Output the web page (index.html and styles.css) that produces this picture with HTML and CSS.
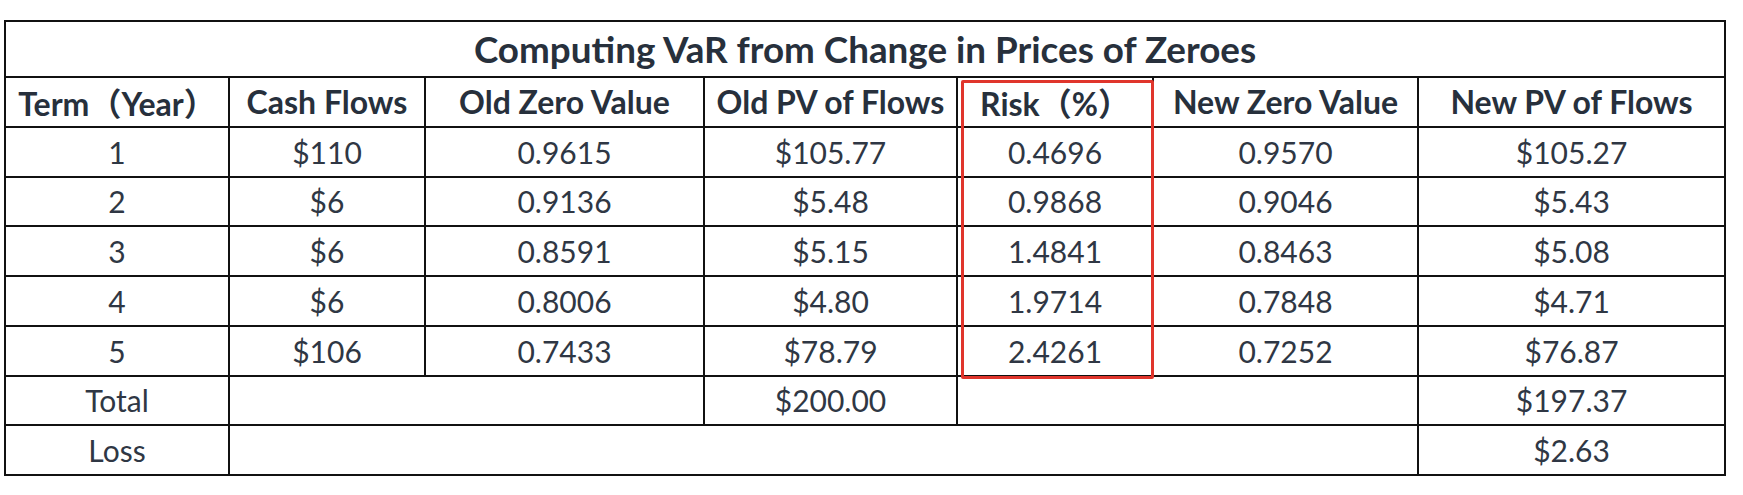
FILE: index.html
```html
<!DOCTYPE html>
<html>
<head>
<meta charset="utf-8">
<link rel="stylesheet" href="styles.css">
</head>
<body>
<div class="wrap">
  <table class="var">
    <colgroup>
      <col class="c1"><col class="c2"><col class="c3"><col class="c4"><col class="c5"><col class="c6"><col class="c7">
    </colgroup>
    <tr class="title-row"><th colspan="7" class="title">Computing VaR from Change in Prices of Zeroes</th></tr>
    <tr class="head"><th>Term（Year）</th><th>Cash Flows</th><th>Old Zero Value</th><th>Old PV of Flows</th><th>Risk（%）</th><th>New Zero Value</th><th>New PV of Flows</th></tr>
    <tr><td>1</td><td>$110</td><td>0.9615</td><td>$105.77</td><td>0.4696</td><td>0.9570</td><td>$105.27</td></tr>
    <tr><td>2</td><td>$6</td><td>0.9136</td><td>$5.48</td><td>0.9868</td><td>0.9046</td><td>$5.43</td></tr>
    <tr><td>3</td><td>$6</td><td>0.8591</td><td>$5.15</td><td>1.4841</td><td>0.8463</td><td>$5.08</td></tr>
    <tr><td>4</td><td>$6</td><td>0.8006</td><td>$4.80</td><td>1.9714</td><td>0.7848</td><td>$4.71</td></tr>
    <tr><td>5</td><td>$106</td><td>0.7433</td><td>$78.79</td><td>2.4261</td><td>0.7252</td><td>$76.87</td></tr>
    <tr><td>Total</td><td colspan="2"></td><td>$200.00</td><td colspan="2"></td><td>$197.37</td></tr>
    <tr><td>Loss</td><td colspan="5"></td><td>$2.63</td></tr>
  </table>
  <div class="highlight"></div>
</div>
</body>
</html>
```
FILE: styles.css
```css
html, body {
  margin: 0;
  padding: 0;
  background: #ffffff;
}
body {
  font-family: Lato, "Noto Sans CJK SC", sans-serif;
  color: #2f3744;
}
.wrap {
  position: relative;
  width: 1722px;
  margin: 20px 0 0 4px;
}
.var {
  border-collapse: collapse;
  table-layout: fixed;
  width: 1722px;
}
.c1 { width: 224px; }
.c2 { width: 196px; }
.c3 { width: 279px; }
.c4 { width: 253px; }
.c5 { width: 196px; }
.c6 { width: 265px; }
.c7 { width: 307px; }
.var th, .var td {
  border: 2px solid #111111;
  text-align: center;
  padding: 0;
  white-space: nowrap;
  overflow: hidden;
}
.var td {
  font-size: 30px;
  font-weight: 400;
  height: 47.75px;
}
.var th {
  font-size: 32px;
  font-weight: 700;
  color: #27303c;
}
.title-row th {
  height: 54px;
  font-size: 36.8px;
}
.head th {
  height: 47.75px;
}
.highlight {
  position: absolute;
  left: 957px;
  top: 60px;
  width: 187px;
  height: 293px;
  border: 3px solid #e0352c;
  border-radius: 2px;
  pointer-events: none;
}
```
